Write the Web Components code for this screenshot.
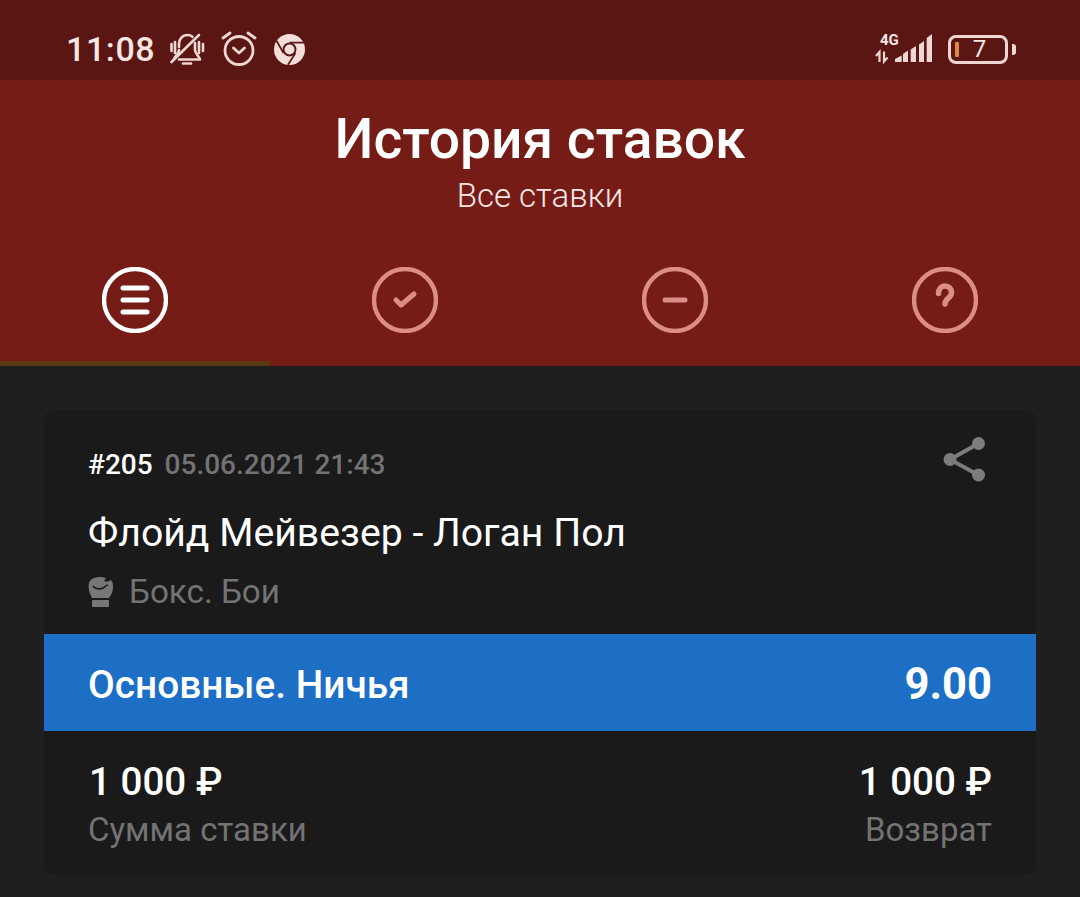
<!DOCTYPE html>
<html lang="ru">
<head>
<meta charset="utf-8">
<title>История ставок</title>
<style>
  html, body { margin: 0; height: 100%; background: #1f1f1f; }
  body { font-family: Roboto, "Liberation Sans", sans-serif; overflow: hidden; }
</style>
</head>
<body>
<status-bar></status-bar>
<app-header title-text="История ставок" subtitle="Все ставки"></app-header>
<bet-card></bet-card>

<script>
const statusStyles = `
<style>
  :host { display: flex; align-items: center; justify-content: space-between; box-sizing: border-box; height: 80px; padding: 18px 64px 0 66px; background: #5a1613; color: #f7e6e4; }
  .left, .right { display: flex; align-items: center; }
  .time { font-size: 34px; font-weight: 500; letter-spacing: 0.6px; margin-right: 14px; }
  svg { display: block; }
  .alarm { margin-left: 16px; }
  .chrome { margin-left: 17px; }
  .net { position: relative; width: 57px; height: 30px; margin-right: 16px; }
  .net span { position: absolute; left: 5px; top: -1px; font-size: 15px; font-weight: 700; line-height: 14px; }
  .net svg { position: absolute; left: 0; top: 0; }
  .battery { position: relative; display: flex; align-items: center; justify-content: center; box-sizing: border-box; width: 60px; height: 29px; padding-left: 3px; border: 3px solid #f0d6d3; border-radius: 8px; font-size: 24px; line-height: 1; }
  .level { position: absolute; left: 4px; top: 4px; width: 4px; height: 15px; border-radius: 1px; background: #dd8a45; }
  .nub { width: 4px; height: 11px; margin-left: 4px; border-radius: 0 3px 3px 0; background: #f0d6d3; }
</style>
`;

class StatusBar extends HTMLElement {
  constructor() {
    super();
    this.root = this.attachShadow({ mode: 'open' });
    this.root.innerHTML = `
      ${statusStyles}
      <div class="left">
        <span class="time">11:08</span>
        <svg width="36" height="36" viewBox="0 0 36 36" fill="none" stroke="#f0d6d3" stroke-width="2.6" stroke-linecap="round" stroke-linejoin="round">
          <path d="M10 16v-3c0-5 3.500-9 8.500-9 2 0 3.700.6 5 1.800"/>
          <path d="M26 12v7c0 3 3 5 5 9.500H10"/>
          <path d="M10 19c0 3-3 5-5 9"/>
          <path d="M14 32.500h8"/>
          <path d="M2.500 31L30 4"/>
          <path d="M6 11v11M2.500 13v7M30 11v11M34 13v7"/>
        </svg>
        <svg class="alarm" width="36" height="36" viewBox="0 0 36 36" fill="none" stroke="#f0d6d3" stroke-width="2.8" stroke-linecap="round" stroke-linejoin="round">
          <circle cx="18" cy="19.500" r="14"/>
          <path d="M12.500 17l5.500 5 5.500-5"/>
          <path d="M2 7L9 2M34 7L27 2"/>
        </svg>
        <svg class="chrome" width="31" height="31" viewBox="0 0 30 30">
          <circle cx="15" cy="15" r="15" fill="#f3dedc"/>
          <circle cx="15" cy="15" r="6.700" fill="#5a1613"/>
          <circle cx="15" cy="15" r="4.800" fill="#f3dedc"/>
          <path d="M15 8.300H29M9.200 18.500L2.500 6.500M20.800 18.500L13.500 29.800" stroke="#5a1613" stroke-width="1.700" fill="none"/>
        </svg>
      </div>
      <div class="right">
        <div class="net">
          <span>4G</span>
          <svg width="57" height="30" viewBox="0 0 57 30" fill="#f0d6d3">
            <path d="M4.500 28V18L1 22M9 17.500v10l3.500-4" fill="none" stroke="#f0d6d3" stroke-width="2.200"/>
            <path d="M20 28v-3l6.700-3.500V28zM28 28V20l5-3.500V28zM35.700 28V15.500l5.300-3.500V28zM44 28V10.500l5-3.500V28zM51.700 28V4l5.300-4V28z"/>
          </svg>
        </div>
        <div class="battery"><i class="level"></i>7</div>
        <i class="nub"></i>
      </div>
    `;
  }
}

const headerStyles = `
<style>
  :host { display: block; height: 286px; background: #761c17; color: #fff; }
  .titles { display: flex; flex-direction: column; align-items: center; height: 160px; box-sizing: border-box; padding-top: 29px; }
  .title { font-size: 55.2px; font-weight: 500; line-height: 60px; }
  .subtitle { font-size: 33px; font-weight: 300; line-height: 36px; margin-top: 9px; color: #f6e8e7; }
  .tabs { display: grid; grid-template-columns: repeat(4, 1fr); height: 126px; }
</style>
`;

class AppHeader extends HTMLElement {
  constructor() {
    super();
    this.root = this.attachShadow({ mode: 'open' });
    this.root.innerHTML = `
      ${headerStyles}
      <div class="titles">
        <div class="title">${this.getAttribute('title-text')}</div>
        <div class="subtitle">${this.getAttribute('subtitle')}</div>
      </div>
      <div class="tabs">
        <tab-item active>
          <path d="M21 21h24M21 33h24M21 45h24" stroke-width="5"/>
        </tab-item>
        <tab-item>
          <path d="M24 33l5 5L42 27" stroke-width="5"/>
        </tab-item>
        <tab-item>
          <path d="M23 33h20" stroke-width="5"/>
        </tab-item>
        <tab-item>
          <path d="M26.500 26.500c0-4.300 2.800-7.500 6.500-7.500s6.500 2.700 6.500 6.500c0 5.800-6.500 5.500-6.500 11.500" stroke-width="5.500"/>
          <circle cx="33" cy="45" r="2.800" fill="currentColor" stroke-width="1"/>
        </tab-item>
      </div>
    `;
  }
}

class TabItem extends HTMLElement {
  constructor() {
    super();
    this.root = this.attachShadow({ mode: 'open' });
    this.root.innerHTML = `
      <style>
        :host { display: flex; justify-content: center; box-sizing: border-box; padding-top: 27px; height: 126px; color: #dd8d87; }
        :host([active]) { color: #fff; border-bottom: 5px solid #5a3a10; }
        svg { display: block; }
      </style>
      <svg width="66" height="66" viewBox="0 0 66 66" fill="none" stroke="currentColor" stroke-linecap="round" stroke-linejoin="round">
        <circle cx="33" cy="33" r="31" stroke-width="4.400"/>
        ${this.innerHTML}
      </svg>
    `;
  }
}

const cardStyles = `
<style>
  :host { display: block; box-sizing: border-box; height: 465px; margin: 44px 44px 0; border-radius: 10px; background: #1a1a1a; color: #fff; }
  .top { box-sizing: border-box; height: 224px; padding: 23px 44px 0; }
  .meta { display: flex; align-items: center; justify-content: space-between; height: 62px; }
  .meta-text { font-size: 28px; font-weight: 500; }
  .date { color: #737373; margin-left: 5px; }
  .share { align-self: flex-start; margin: 4px 6px 0 0; }
  .match { font-size: 39.2px; line-height: 46px; margin-top: 15px; }
  .sport { display: flex; align-items: center; gap: 16px; margin-top: 17px; font-size: 33.2px; line-height: 38px; color: #737373; }
  .outcome { display: flex; align-items: center; justify-content: space-between; box-sizing: border-box; height: 97px; padding: 3px 44px 0; background: #1d6fc6; }
  .outcome-name { font-size: 38.8px; font-weight: 500; }
  .odds { font-size: 43.5px; font-weight: 700; }
  .totals { display: flex; justify-content: space-between; padding: 28px 44px 0; }
  .col.end { text-align: right; }
  .amount { font-size: 38.6px; font-weight: 500; line-height: 46px; margin-left: 1px; }
  .label { font-size: 33px; line-height: 38px; margin-top: 6px; color: #737373; }
</style>
`;

class BetCard extends HTMLElement {
  constructor() {
    super();
    this.root = this.attachShadow({ mode: 'open' });
    this.root.innerHTML = `
      ${cardStyles}
      <div class="top">
        <div class="meta">
          <div class="meta-text">#205 <span class="date">05.06.2021 21:43</span></div>
          <svg class="share" width="43" height="45" viewBox="0 0 43 45" fill="#7c7c7c" stroke="none">
            <path d="M35.500 6.500L7 22.500 35.500 38" fill="none" stroke="#7c7c7c" stroke-width="4"/>
            <circle cx="35.500" cy="6.500" r="6.500"/>
            <circle cx="7" cy="22.500" r="6.500"/>
            <circle cx="35.500" cy="38" r="6.500"/>
          </svg>
        </div>
        <div class="match">Флойд Мейвезер - Логан Пол</div>
        <div class="sport">
          <svg width="25" height="30" viewBox="0 0 25 30" fill="#777">
            <path d="M4 21C1 16 0 10 1 6c1-4 6-6 11-6 2 0 4 .4 6 1l-2 3c2 .5 4 1 5 0l2-1c2 2 2 5 2 7 0 5-2 8-4 11z"/>
            <rect x="4" y="23" width="17" height="7" rx="1"/>
            <path d="M5 9c2 3 7 3.500 10 2 2-1 3-3 5-3" fill="none" stroke="#1a1a1a" stroke-width="1.600"/>
          </svg>
          <span>Бокс. Бои</span>
        </div>
      </div>
      <div class="outcome">
        <span class="outcome-name">Основные. Ничья</span>
        <span class="odds">9.00</span>
      </div>
      <div class="totals">
        <div class="col">
          <div class="amount">1 000 ₽</div>
          <div class="label">Сумма ставки</div>
        </div>
        <div class="col end">
          <div class="amount">1 000 ₽</div>
          <div class="label">Возврат</div>
        </div>
      </div>
    `;
  }
}

customElements.define('tab-item', TabItem);
customElements.define('status-bar', StatusBar);
customElements.define('app-header', AppHeader);
customElements.define('bet-card', BetCard);
</script>
</body>
</html>
